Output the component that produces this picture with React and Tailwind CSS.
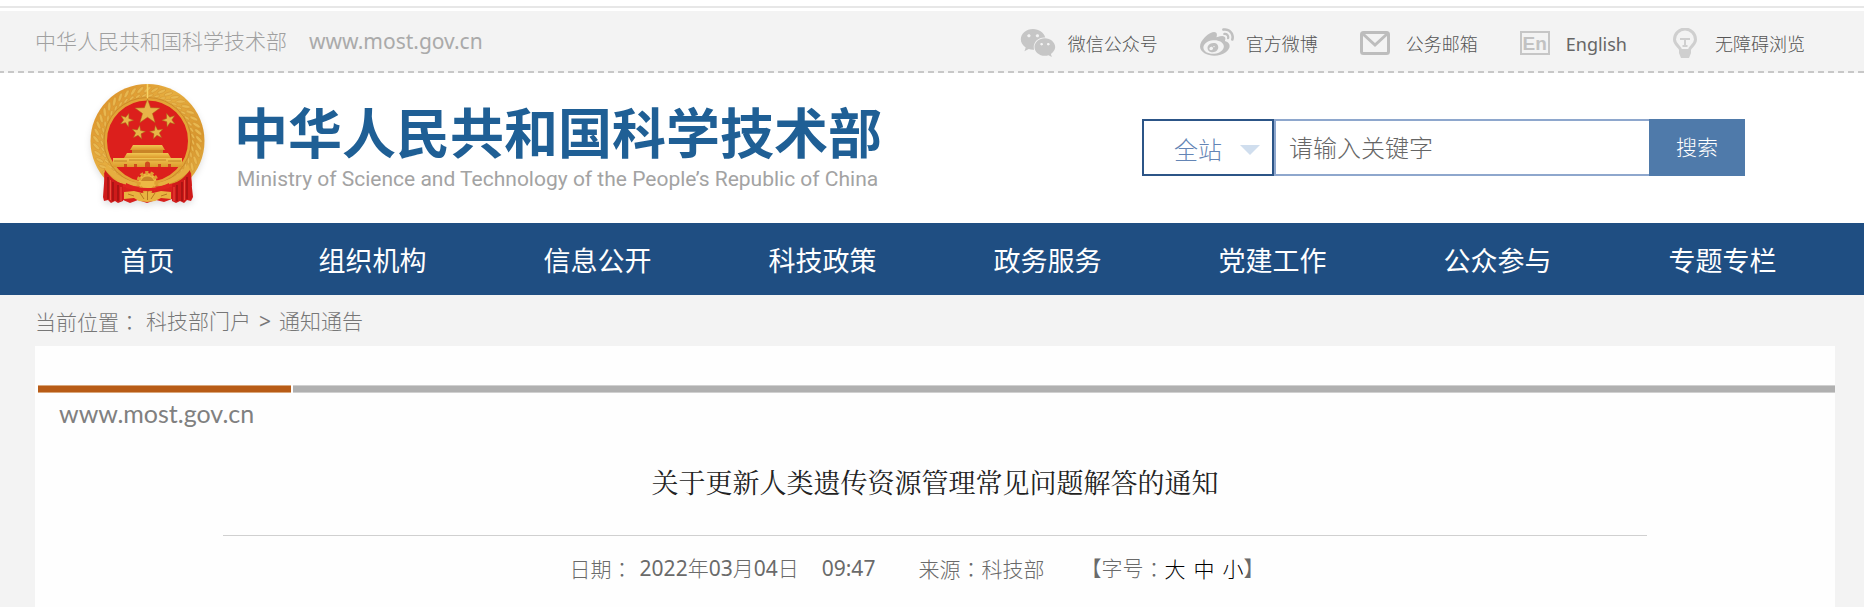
import React, { useState } from 'react';
import { FaWeibo, FaWeixin } from 'react-icons/fa';

const NAV_ITEMS = ['首页', '组织机构', '信息公开', '科技政策', '政务服务', '党建工作', '公众参与', '专题专栏'];

function starPoints(cx, cy, r, turn = 0) {
  const points = [];
  for (let i = 0; i < 10; i++) {
    const radius = i % 2 === 0 ? r : r * 0.4;
    const angle = ((i * 36 - 90 + turn) * Math.PI) / 180;
    points.push(`${(cx + radius * Math.cos(angle)).toFixed(1)},${(cy + radius * Math.sin(angle)).toFixed(1)}`);
  }
  return points.join(' ');
}

// National emblem: wheat wreath, five stars, gate tower, gear and ribbon
function Emblem() {
  const ears = [];
  for (let deg = 126; deg <= 414; deg += 8) {
    ears.push(deg);
  }
  return (
    <svg viewBox="0 0 115 128" className="w-[115px] shrink-0 drop-shadow-md" role="img" aria-label="国徽">
      <defs>
        <linearGradient id="gold" x1="0" y1="0" x2="1" y2="1">
          <stop offset="0" stopColor="#d98a25" />
          <stop offset="0.4" stopColor="#e6ae40" />
          <stop offset="0.7" stopColor="#d8962e" />
          <stop offset="1" stopColor="#e8bb4c" />
        </linearGradient>
        <linearGradient id="gate" x1="0" y1="0" x2="0" y2="1">
          <stop offset="0" stopColor="#f0c552" />
          <stop offset="1" stopColor="#dc9a2c" />
        </linearGradient>
      </defs>
      <ellipse cx="57.5" cy="57" rx="57" ry="57" fill="url(#gold)" />
      <g fill="#e8b850" stroke="#cc8a2c" strokeWidth="0.4">
        {ears.map((deg) => (
          <g key={deg} transform={`rotate(${deg} 57.5 57)`}>
            <ellipse cx="109" cy="57" rx="4.5" ry="1.6" transform="rotate(50 109 57)" />
            <ellipse cx="103" cy="60" rx="3" ry="1.2" transform="rotate(70 103 60)" />
          </g>
        ))}
      </g>
      <circle cx="57.5" cy="57" r="42" fill="#dc1f1c" stroke="#e3a437" strokeWidth="3" />
      <circle cx="57.5" cy="57" r="43.500" fill="none" stroke="#bd7a22" strokeWidth="0.6" />
      <path d="M57.5 0v14" stroke="#f8d465" strokeWidth="1.5" />
      <g fill="#e8b548" stroke="#a96f1a" strokeWidth="0.5">
        <polygon points={starPoints(57.5, 28, 13)} />
        <polygon points={starPoints(36.5, 36, 7, 20)} />
        <polygon points={starPoints(79, 36, 7, -20)} />
        <polygon points={starPoints(48.5, 48.5, 7, 10)} />
        <polygon points={starPoints(66.5, 48.5, 7, -10)} />
      </g>
      <g fill="url(#gate)">
        <path d="M43 61h29l3 5H40z" />
        <path d="M42 66h31v3H42z" fill="#c98527" />
        <path d="M37 69h41l3 5H34z" />
        <path d="M23 74h69v9H23z" />
      </g>
      <path d="M39 76h37M24 77h13M78 77h13" stroke="#b8741d" strokeWidth="0.8" />
      <path d="M55 83v-3a2.500 2.500 0 0 1 5 0v3zM44 83v-3h3v3zM68 83v-3h3v3zM34 83v-3h3v3zM78 83v-3h3v3z" fill="#cf4a1e" />
      {/* crossed stems */}
      <path d="M14 84c12 13 26 19 43 19s32-6 44-19l-2 12c-12 9-25 12-42 12S28 105 16 97z" fill="url(#gold)" />
      {/* ribbon: middle band */}
      <path d="M14 88c6 6 10 10 20 12 8 2 12 3 23 3s15-1 23-3c10-2 15-6 21-12l1 14-20 5H33l-18-5z" fill="#e0231f" />
      <path d="M33 103h49v12l-8 3-8-2-9 3-9-3-8 3-7-3z" fill="#d8201d" />
      {/* stems rising into the knot */}
      <path d="M17 80c8 10 18 17 32 19l-3 3c-13-2-23-7-31-16zM98 80c-8 10-18 17-32 19l3 3c13-2 23-7 31-16z" fill="#e6ae40" />
      {/* drapes */}
      <path d="M15 86c5 7 11 12 18 14v17l-5 2-3-2-4 2-3-3-4 1-1-4z" fill="#cf1a1a" />
      <path d="M100 86c-5 7-11 12-18 14v17l4 2 4-2 4 2 3-3 4 1 2-4z" fill="#cf1a1a" />
      {/* gear */}
      <circle cx="57.500" cy="98" r="9" fill="#edb944" stroke="#e0a033" strokeWidth="4" strokeDasharray="3 2" />
      <path d="M36 99c6 3 13 5 21.500 5s16-2 21.500-5v5c-7 2-13 3-21.500 3S42 106 36 104z" fill="#e0231f" />
      <path d="M51 97a7 7 0 0 1 13 0z" fill="#c98527" />
      <path d="M34 108l10-1 8 2 5-2 6 2 8-2 10 1v7l-10-1-6 3-8 1-8-1-5-3-10 1z" fill="#e9b440" />
      <path d="M50 109l4 6M57.500 107v9M65 109l-4 6M38 110l6 2M77 110l-6 2" stroke="#b87820" strokeWidth="1" />
      <path d="M18 93v22M23 98v19M28 101v16M97 93v22M92 98v19M87 101v16" stroke="#941010" strokeWidth="1.200" />
      <path d="M20.500 96v20M94.500 96v20M31 103v14M84 103v14" stroke="#ee4a3a" strokeWidth="1" />
    </svg>
  );
}

function MailIcon() {
  return (
    <svg viewBox="0 0 30 24" className="w-[30px]" fill="none" stroke="#bdbdbd" strokeWidth="3" aria-hidden="true">
      <rect x="1.500" y="1.500" width="27" height="21" rx="2" />
      <path d="M3 3l12 11L27 3" />
    </svg>
  );
}

function EnglishIcon() {
  return (
    <span className="flex h-6 w-[30px] items-center justify-center border-2 border-[#c6c6c6] font-['Liberation_Sans',sans-serif] text-[19px] leading-none font-bold text-[#c2c2c2]" aria-hidden="true">
      En
    </span>
  );
}

function BulbIcon() {
  return (
    <svg viewBox="0 0 24 30" className="w-6" aria-hidden="true">
      <path d="M7.500 22c0-3-6-5-6-10.500a10.500 10.500 0 0 1 21 0c0 5.500-6 7.500-6 10.500" fill="none" stroke="#cfcfcf" strokeWidth="3" />
      <path d="M6 21h12v4l-2 5H8l-2-5z" fill="#cfcfcf" />
      <path d="M7 11h10M12 11v7M9.500 18h5" fill="none" stroke="#cfcfcf" strokeWidth="2" />
    </svg>
  );
}

// Full-width colon set in the middle of its box
function Colon() {
  return (
    <span lang="zh-TW" className="font-['Noto_Sans_CJK_TC',sans-serif]">
      ：
    </span>
  );
}

const TOP_LINKS = [
  { label: '微信公众号', icon: <FaWeixin className="size-9 text-[#c6c6c6]" />, style: 'gap-3' },
  { label: '官方微博', icon: <FaWeibo className="size-[34px] text-[#c0c0c0]" />, style: 'gap-3' },
  { label: '公务邮箱', icon: <MailIcon />, style: 'gap-4' },
  { label: 'English', icon: <EnglishIcon />, style: 'gap-4 pr-1 font-normal text-[#666]' },
  { label: '无障碍浏览', icon: <BulbIcon />, style: 'gap-[18px]' },
];

function TopBar() {
  return (
    <div className="mt-[6px] border-t-2 border-[#e7e7e7] pt-[3px]">
      <div className="flex h-[60px] items-center justify-between bg-[#f3f3f3] pr-[59px] pl-[35px]">
        <p className="flex gap-[22px] pt-px text-[21px] text-[#a0a0a0]">
          <span>中华人民共和国科学技术部</span>
          <span className="font-normal text-[#aaa]">www.most.gov.cn</span>
        </p>
        <ul className="flex items-center gap-[42px] pt-1 text-[18px] text-[#555]">
          {TOP_LINKS.map((link) => (
            <li key={link.label}>
              <a href="#" className={`flex items-center ${link.style}`}>
                {link.icon}
                <span className="pt-[3px]">{link.label}</span>
              </a>
            </li>
          ))}
        </ul>
      </div>
      <div className="h-[2px] bg-[repeating-linear-gradient(90deg,#c8c8c8_0_4px,#f6f6f6_4px_8px,#c8c8c8_8px_10px)]" />
    </div>
  );
}

function SearchForm() {
  const [keyword, setKeyword] = useState('');

  return (
    <form className="mb-px flex h-[57px]" onSubmit={(e) => e.preventDefault()}>
      <div className="relative">
        <select
          aria-label="搜索范围"
          className="h-full w-[132px] appearance-none border-2 border-[#2c5587] bg-white pt-1 pl-[30px] text-[24px] text-[#6485b5]"
        >
          <option>全站</option>
        </select>
        <span className="pointer-events-none absolute top-[26px] right-[14px] border-x-[10px] border-t-[10px] border-x-transparent border-t-[#d0deee]" />
      </div>
      <input
        type="text"
        aria-label="关键字"
        placeholder="请输入关键字"
        value={keyword}
        onChange={(e) => setKeyword(e.target.value)}
        className="w-[375px] border-y-2 border-l-2 border-[#8ea7cd] bg-white pl-[13px] text-[24px] placeholder:text-[#666]"
      />
      <button type="submit" className="w-24 bg-[#4f7aaa] pt-px text-[21px] text-white">
        搜索
      </button>
    </form>
  );
}

function Header() {
  return (
    <header className="flex h-[150px] items-center justify-between pr-[119px] pl-[90px]">
      <div className="flex items-center gap-[29px]">
        <Emblem />
        <div className="pt-[2px] whitespace-nowrap">
          <h1 className="text-[54px] leading-[58px] font-bold text-[#1f5f95]">中华人民共和国科学技术部</h1>
          <p className="pt-[2px] pl-[3px] font-['Roboto',sans-serif] text-[21px] leading-[30px] font-normal text-[#a3a3a3]">
            Ministry of Science and Technology of the People’s Republic of China
          </p>
        </div>
      </div>
      <SearchForm />
    </header>
  );
}

function Article() {
  return (
    <article className="min-h-[261px] bg-[#fefefe] pt-[39px]">
      <div className="flex h-[8px] gap-[2px] pl-[3px]">
        <div className="w-[253px] border-y border-[#d9a77c] bg-[#b85c17]" />
        <div className="flex-1 border-y border-[#d0d0d0] bg-[#b0b0b0]" />
      </div>
      <p className="pl-6 font-['Lato',sans-serif] text-[25px] leading-[40px] font-normal text-[#808080]">www.most.gov.cn</p>
      <h2 className="pt-[29px] text-center font-['Noto_Serif_CJK_SC','Noto_Sans_CJK_SC',serif] text-[27px] leading-[40px] font-normal text-[#222]">
        关于更新人类遗传资源管理常见问题解答的通知
      </h2>
      <hr className="mx-[188px] mt-[33px] border-[#d0d0d0]" />
      <div className="flex justify-center pt-[17px] pr-9 text-[21px] leading-[30px] text-[#6a6a6a]">
        <span>
          日期
          <Colon />
        </span>
        <span className="pl-[7px]">
          <span className="font-normal">2022</span>年<span className="font-normal">03</span>月
          <span className="font-normal">04</span>日
        </span>
        <span className="pl-[23px] font-normal">09:47</span>
        <span className="pl-[43px]">
          来源
          <Colon />
          科技部
        </span>
        <span className="flex pl-9">
          【字号
          <Colon />
          <span className="flex gap-2 text-black">
            <button type="button">大</button>
            <button type="button">中</button>
            <button type="button">小</button>
          </span>
          】
        </span>
      </div>
    </article>
  );
}

export default function App() {
  return (
    <div className="flow-root bg-white font-['Noto_Sans','Noto_Sans_CJK_SC',sans-serif] font-light" lang="zh-CN">
      <TopBar />
      <Header />
      <nav className="bg-[#1f4e82] pr-[29px] pl-[35px]">
        <ul className="grid grid-cols-8 pt-1 text-center text-[27px] leading-[68px] font-normal text-white">
          {NAV_ITEMS.map((item) => (
            <li key={item}>
              <a href="#">{item}</a>
            </li>
          ))}
        </ul>
      </nav>
      <main className="bg-[#f3f3f3] pr-[29px] pl-[35px]">
        <p className="flex gap-2 pt-[2px] text-[21px] leading-[48px] text-[#777]">
          <span className="-mr-[2px]">
            当前位置
            <Colon />
          </span>
          <a href="#">科技部门户</a>
          <span className="font-normal">&gt;</span>
          <a href="#">通知通告</a>
        </p>
        <Article />
      </main>
    </div>
  );
}
